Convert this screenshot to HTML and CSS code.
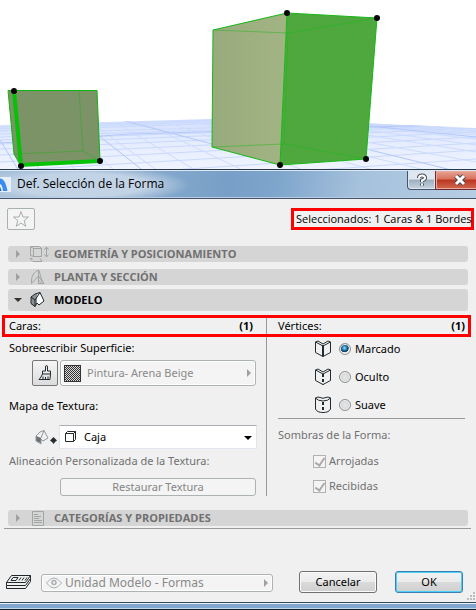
FILE: index.html
```html
<!DOCTYPE html>
<html lang="es">
<head>
<meta charset="utf-8">
<title>Def. Selección de la Forma</title>
<link rel="stylesheet" href="styles.css">
</head>
<body>
<svg class="scene" viewBox="0 0 476 169" preserveAspectRatio="xMidYMax slice" aria-hidden="true">
  <defs>
    <linearGradient id="ground" x1="0" y1="117" x2="0" y2="169" gradientUnits="userSpaceOnUse">
      <stop offset="0" stop-color="#cfdcfd"/><stop offset=".35" stop-color="#e2eafe"/><stop offset="1" stop-color="#f0f4ff"/>
    </linearGradient>
    <linearGradient id="face" x1="0" y1="0" x2="1" y2="0">
      <stop offset="0" stop-color="#98ab7c"/><stop offset="1" stop-color="#a3b484"/>
    </linearGradient>
    <clipPath id="floor"><path d="M0 125L245 118L476 128V169H0z"/></clipPath>
  </defs>
  <path fill="#fff" d="M0 0h476v169H0z"/>
  <path fill="url(#ground)" d="M0 125L245 118L476 128V169H0z"/>
  <g clip-path="url(#floor)" fill="none">
    <path stroke="#c9d8fd" d="M0 127L245 119L476 129M0 129L260 120L476 131M0 131L280 121L476 133M0 134L476 120M0 137L476 121M0 140L476 123M0 144L476 125M0 149L476 128M0 155L476 132M0 162L476 137M0 171L476 143M80 176L476 150M230 176L476 159"/>
    <path stroke="#cddbfd" d="M340 121L476 131M325 121L476 135M310 120L476 139M290 120L476 145M270 120L476 152M240 119L476 162M215 120L450 176M190 120L370 169M165 121L320 176M140 121L255 176M115 122L205 176M90 122L165 176M65 123L120 176M40 124L80 176M15 124L43 176"/>
    <path stroke="#b2c7fa" d="M125 121L220 146M98 135L150 176M0 140L22 176M370 150L476 176M370 126L476 137M0 143L130 134L476 124"/>
  </g>
  <path fill="#7c9267" d="M8 90L97 90L100 161L21 166L14 154z"/>
  <g fill="none" stroke="#10b410">
    <path stroke-opacity=".4" d="M79 90L83 151L100 161M83 151L14 154"/>
    <path d="M14 90.500H8L14 154L21 166M14 90.500H97L100 161"/>
    <path stroke="#06c206" stroke-width="4" d="M14 91L21 165L100 161"/>
  </g>
  <path fill="url(#face)" d="M213 30L287 13L280 165L212 147z"/>
  <path fill="#4fa83e" d="M287 13L377 18L366 159L280 165z"/>
  <g fill="none" stroke="#16b816">
    <path stroke-opacity=".45" d="M213 30L288 33L377 18M288 33L284 144L212 147M284 144L366 159"/>
    <path d="M213 30L287 13L377 18L366 159L280 165L212 147zM287 13L280 165"/>
  </g>
  <g fill="#050505"><circle cx="14" cy="91" r="3"/><circle cx="21" cy="166" r="3"/><circle cx="100" cy="161" r="3"/><circle cx="287" cy="13" r="3"/><circle cx="377" cy="18" r="3"/><circle cx="366" cy="159" r="3"/><circle cx="280" cy="165" r="3"/></g>
</svg>

<div class="dialog" role="dialog" aria-labelledby="dialog-title">
  <header class="titlebar">
    <svg class="app-icon" width="12" height="16" viewBox="0 0 12 16" aria-hidden="true"><path fill="#e8eff6" d="M0 0h11v15H0z"/><path fill="#3a8bf0" d="M0 1.500Q5 1 7.500 14H3Q2.500 8 0 7z"/><path fill="#1767c9" d="M0 9.500L1.500 14H0z"/></svg>
    <h1 id="dialog-title">Def. Selección de la Forma</h1>
    <div class="window-buttons">
      <button class="help" type="button" aria-label="Ayuda"><svg width="12" height="14" viewBox="0 0 12 14"><path d="M3 5Q3 2.500 6 2.500T9 5Q9 6.500 6 7.500V9M6 10.500v2" stroke="#444b5a" stroke-width="4" fill="none"/><path d="M3 5Q3 2.500 6 2.500T9 5Q9 6.500 6 7.500V9M6 10.500v2" stroke="#fff" stroke-width="2" fill="none"/></svg></button>
      <button class="close" type="button" aria-label="Cerrar"><svg width="14" height="12" viewBox="0 0 14 12"><path d="M3 2l8 8M11 2l-8 8" stroke="#50454c" stroke-width="5"/><path d="M3 2l8 8M11 2l-8 8" stroke="#fff" stroke-width="3"/></svg></button>
    </div>
  </header>

  <main class="content">
    <div class="toolbar">
      <button class="favorite" type="button" aria-label="Favoritos"><svg width="18" height="18" viewBox="0 0 18 18"><path d="M9 1.500l2 5.500h5.500l-4.300 3.500 1.600 5.800L9 13l-4.800 3.300 1.600-5.800L1.500 7H7z" fill="none" stroke="#a9aeae"/></svg></button>
      <p class="selection">Seleccionados: 1 Caras &amp; 1 Bordes</p>
    </div>

    <button class="section" type="button" aria-expanded="false"><span class="arrow"></span>
      <svg width="20" height="18" viewBox="0 0 20 18"><g fill="none" stroke="#a2a5a5"><path d="M4.500 3.500h8v8h-8zM4.500 3.500l-3-2h9l2 2M1.500 1.500v9l3 1M3.500 13.500H1l3 3h9l-2-3"/><path d="M17.500 3v8M15.500 4.500l2-2.500 2 2.500M15.500 9.500l2 2.500 2-2.500"/></g></svg>
      <span>GEOMETRÍA Y POSICIONAMIENTO</span></button>
    <button class="section" type="button" aria-expanded="false"><span class="arrow"></span>
      <svg width="20" height="18" viewBox="0 0 20 18"><path d="M2.500 15.500V12Q3 5 9.500 2v13.500M2.500 15.500L9.500 8M9.500 2l1 2 1 4 1 3 1 2 1.500 2.500h-6M9.500 8l4 6M9.500 12l3 3" fill="none" stroke="#a2a5a5"/></svg>
      <span>PLANTA Y SECCIÓN</span></button>
    <button class="section open" type="button" aria-expanded="true"><span class="arrow"></span>
      <svg width="20" height="18" viewBox="0 0 20 18"><path d="M2 6L8 2v10l-2 4-4-3z" fill="#8b9195"/><path d="M8 12V6l3-4 4 8-5 4z" fill="#fff"/><path d="M2 12.500V6L6 3l5-1.500L15 10l-5 4-2-2-2 3.500zM6 15.500V9l5-7.500M2 6l4 3" fill="none" stroke="#20282d"/></svg>
      <span>MODELO</span></button>

    <div class="columns">
      <section class="faces">
        <h2><span>Caras:</span><b>(1)</b></h2>
        <p class="label">Sobreescribir Superficie:</p>
        <div class="row surface">
          <button class="brush" type="button" aria-label="Sobreescribir superficie"><svg width="16" height="18" viewBox="0 0 16 18"><path d="M8.500 7V3q0-1.500 1-1.500t1 1.500v4h3v3h-8V7zM5.500 10L4 13l-2 2.500h11l.5-5.500M6 12.500v3M8.500 13v2.500M11 12.500v3" fill="none" stroke="#222b30"/></svg></button>
          <button class="menu material" type="button" disabled><span class="swatch"></span><span>Pintura- Arena Beige</span><span class="arrow"></span></button>
        </div>
        <label class="label" for="texture">Mapa de Textura:</label>
        <div class="row texture">
          <svg width="22" height="16" viewBox="0 0 22 16" aria-hidden="true"><path d="M1 7l5 2v5l-5-2z" fill="#697176"/><path d="M1 12V7l4-4 4-1.500L13 9l-5 3-2-2v5l-5-3M6 9l3-7.500" fill="none" stroke="#90979a"/><path d="M18.500 8l3.500 3.500-2 1.500-1.500 2-1.500-2-2-1.500z" fill="#252d31"/></svg>
          <div class="select">
            <svg width="13" height="13" viewBox="0 0 13 13" aria-hidden="true"><path d="M1.500 3.500h8v8h-8zM1.500 3.500l2-2h8v8l-2 2M9.500 3.500l2-2" fill="none" stroke="#20282d"/></svg>
            <select id="texture"><option>Caja</option></select>
          </div>
        </div>
        <p class="label muted">Alineación Personalizada de la Textura:</p>
        <button class="restore" type="button" disabled>Restaurar Textura</button>
      </section>

      <section class="vertices">
        <h2><span>Vértices:</span><b>(1)</b></h2>
        <div class="options">
          <label><svg width="18" height="18" viewBox="0 0 18 18"><path d="M1.500 2v10.500l7.500 4 7.500-4V2L9 6zM1.500 2L4 1l5 3 5-3 2.500 1" fill="none" stroke="#222b30"/><path d="M9 5v11.500" stroke="#222b30" stroke-width="2"/></svg><input type="radio" name="edge" checked>Marcado</label>
          <label><svg width="18" height="18" viewBox="0 0 18 18"><path d="M1.500 2v10.500l7.500 4 7.500-4V2L9 6zM1.500 2L4 1l5 3 5-3 2.500 1" fill="none" stroke="#222b30"/><path d="M9 6v10.500" stroke="#222b30" stroke-width="2" stroke-dasharray="3 2"/></svg><input type="radio" name="edge">Oculto</label>
          <label><svg width="18" height="18" viewBox="0 0 18 18"><path d="M1.500 2v11Q3 16.500 9 16.500t7.500-3.500V2Q14 5 9 5T1.500 2zM1.500 2L4 1q5 2.500 10 0l2.500 1" fill="none" stroke="#222b30"/><path d="M9 6v10.500" stroke="#222b30" stroke-width="2" stroke-dasharray="3 2"/></svg><input type="radio" name="edge">Suave</label>
        </div>
        <p class="label muted shadows">Sombras de la Forma:</p>
        <div class="checks">
          <label><input type="checkbox" checked disabled>Arrojadas</label>
          <label><input type="checkbox" checked disabled>Recibidas</label>
        </div>
      </section>
    </div>

    <button class="section last" type="button" aria-expanded="false"><span class="arrow"></span>
      <svg width="20" height="18" viewBox="0 0 20 18"><path d="M3.500 2.500h11v14h-11zM5 5.500h4M5 7.500h7M5 9.500h5M5 11.500h8M5 13.500h8" fill="none" stroke="#a2a5a5"/></svg>
      <span>CATEGORÍAS Y PROPIEDADES</span></button>

    <footer class="footer">
      <svg width="26" height="16" viewBox="0 0 26 16" aria-hidden="true"><path d="M6.500 1.500h19l-5 7H1.500zM1.500 8.500v3h19l5-7v-3M1.500 11.500v3h19l5-7v-3M8 3.500h5l-2 3H6zM16 3.500l-2 3M19 3.500l-2 3M22 3.500l-2 3" fill="none" stroke="#20282d"/></svg>
      <button class="menu layer" type="button" disabled><svg width="16" height="12" viewBox="0 0 16 12"><path d="M.5 6Q8-4 15.500 6 8 16 .5 6z" fill="none" stroke="#aaaeb0"/><circle cx="8" cy="5.500" r="2" fill="none" stroke="#aaaeb0" stroke-width="1.500"/></svg><span>Unidad Modelo - Formas</span><span class="arrow"></span></button>
      <button class="push cancel" type="button">Cancelar</button>
      <button class="push ok" type="submit">OK</button>
    </footer>
    <svg class="grip" width="10" height="10" viewBox="0 0 10 10" aria-hidden="true"><path d="M7 1h2v2H7zM4 4h2v2H4zM7 4h2v2H7zM1 7h2v2H1zM4 7h2v2H4zM7 7h2v2H7z" fill="#bdbdbd"/></svg>
  </main>
</div>
</body>
</html>
```
FILE: styles.css
```css
*, *::before, *::after { box-sizing: border-box; }
body { margin: 0; background: #f0f0f0; color: #000; font: 11px/16px "Noto Sans", "Open Sans", sans-serif; }
h1, h2, p { margin: 0; font-size: 11px; font-weight: 400; }
button, select { margin: 0; font: inherit; color: inherit; }
svg { display: block; flex: none; }
.scene { width: 100%; height: 169px; }

.dialog { border-top: 1px solid #29394a; border-bottom: 1px solid #14202c; }
.titlebar { display: flex; height: 29px; border-top: 1px solid #dce8f3; border-bottom: 1px solid #45536b; box-shadow: inset 0 -1px #b9cde2; background: radial-gradient(ellipse 110px 19px at 80px 14px, #c2d3e6 60%, transparent), linear-gradient(100deg, #a4bdd8, #779fc7 48%, #7ea5cc 58%, #a5c1dc 75%, #b6cde3); }
.app-icon { margin-top: 6px; }
h1 { flex: 1; padding: 5px; font-family: "Open Sans", sans-serif; font-size: 12px; }
.window-buttons { display: flex; height: 19px; margin-right: -9px; }
.window-buttons button { display: flex; align-items: center; justify-content: center; padding: 0; border: 1px solid #45536b; border-top: 0; box-shadow: inset 0 0 0 1px #dce5ef; }
.help { width: 29px; border-bottom-left-radius: 4px; background: linear-gradient(#dfe6ee 45%, #9caebf 50%, #c5d4e2); }
.window-buttons .close { width: 50px; margin-left: -1px; border-color: #6b2b2f; box-shadow: inset 0 0 0 1px #e8a89e; background: linear-gradient(#e7a595, #d7715c 45%, #bb3520 50%, #d26a50); }

.content { position: relative; padding: 9px 8px 9px; border-bottom: 1px solid #33485c; box-shadow: 0 1px #e5edf5, 0 5px #80a6ce, 0 6px #c3d7eb; margin-bottom: 6px; }
.toolbar { display: flex; justify-content: space-between; height: 22px; margin: 0 -6px 16px -1px; }
.favorite { display: flex; align-items: center; justify-content: center; width: 28px; padding: 0; border: 1px solid #a9b0b0; border-radius: 2px; background: #f4f4f4; }
.selection { width: 183px; padding-left: 2px; white-space: nowrap; border: 3px solid #f00; font-family: "Open Sans", sans-serif; }

.section { display: flex; align-items: center; width: 100%; height: 16px; margin-bottom: 7px; padding: 0 8px; border: 0; border-radius: 3px; background: #d5d5d5; color: #707070; font-family: "Open Sans", sans-serif; font-weight: 700; text-align: left; }
.section + .section.open { margin-top: -3px; }
.section svg { margin: 0 5px 0 7px; }
.section.open { height: 22px; margin-bottom: 4px; color: #000; }
.arrow { flex: none; width: 4px; height: 8px; background: #a0a0a0; clip-path: polygon(0 0, 100% 50%, 0 100%); }
.section .arrow { margin: 0 2px 0 0; }
.open .arrow { width: 8px; height: 4px; margin: 0 -2px 0 0; background: #333; clip-path: polygon(0 0, 100% 0, 50% 100%); }
.section.open .arrow { margin: 0 0 0 -2px; }

.columns { position: relative; display: grid; grid-template-columns: minmax(0, 1fr) 204px; height: 181px; margin: 0 -3px 14px -6px; }
.columns::before { content: ""; position: absolute; inset: 0 0 auto; height: 22px; border: 3px solid #f00; pointer-events: none; }
.faces { padding: 3px 11px 0 7px; border-right: 1px solid #999; }
.vertices { padding: 3px 6px 0 11px; }
h2 { display: flex; justify-content: space-between; margin-bottom: 6px; }
h2 b { margin-right: 2px; }
.vertices h2 b { margin-right: 0; }
.label { display: block; }
.muted { color: #707070; }
.row { display: flex; }
.surface { height: 26px; gap: 2px; margin: 4px -1px 12px 23px; }
.brush { display: flex; align-items: center; justify-content: center; width: 26px; padding: 0; border: 1px solid #777; border-radius: 2px; background: linear-gradient(#f5f5f5, #dcdcdc); }
.menu { display: flex; flex: 1; align-items: center; padding: 0 4px 0 3px; border: 1px solid #adb2b2; border-radius: 3px; box-shadow: inset 0 0 0 1px #fff; background: #f4f4f4; color: #8a8a8a; }
.menu .arrow { margin-left: auto; }
.swatch { width: 17px; height: 17px; margin-right: 6px; border: 1px solid #333; background: repeating-conic-gradient(#333 0 25%, #ddd 0 50%) 0 0 / 2px 2px; }
.texture { align-items: center; height: 24px; gap: 2px; margin: 11px -2px 4px 26px; }
.select { position: relative; flex: 1; height: 24px; }
.select svg { position: absolute; left: 5px; top: 5px; pointer-events: none; }
.select::after { content: ""; position: absolute; right: 5px; top: 11px; width: 8px; height: 4px; background: #000; clip-path: polygon(0 0, 100% 0, 50% 100%); pointer-events: none; }
select { appearance: none; width: 100%; height: 24px; padding: 0 20px 0 24px; border: 1px solid #e1e5ec; border-top-color: #abadb3; background: #fff; }
.restore { display: block; width: calc(100% - 50px); height: 18px; margin: 9px 0 0 51px; padding: 0; border: 1px solid #adb2b2; border-radius: 3px; background: #f4f4f4; color: #858585; line-height: 14px; }
.options { display: grid; gap: 10px; padding: 0 0 4px 36px; border-bottom: 1px solid #999; }
.options label { display: flex; align-items: center; height: 18px; }
.options input { appearance: none; width: 12px; height: 12px; margin: 0 4px 0 7px; border: 1px solid #8e8f8f; border-radius: 50%; background: radial-gradient(#e8e8e8, #c6cbd0); box-shadow: inset 0 0 0 1px #f4f4f4; }
.options input:checked { background: radial-gradient(circle at 45% 40%, #a6e0ff, #1873ac 30%, #0b3558 48%, #dfe3e6 55%); }
.shadows { margin: 8px 0 10px; }
.checks { display: grid; gap: 9px; padding-left: 35px; color: #707070; }
.checks label { display: flex; align-items: center; gap: 3px; height: 16px; }
.checks input { appearance: none; width: 13px; height: 13px; margin: 0; border: 1px solid #b1b1b1; background: #f4f4f4; }
.checks input::before { content: ""; display: block; width: 6px; height: 10px; margin-left: 3px; border: solid #aaa; border-width: 0 2px 2px 0; transform: rotate(35deg); }
.section.last { margin-bottom: 2px; }

.footer { display: flex; align-items: center; margin: 0 -3px 0 -4px; padding: 42px 8px 0 1px; border-top: 1px solid #999; }
.menu.layer { height: 18px; margin: 2px 26px 0 10px; padding-left: 4px; font-size: 12px; }
.layer svg { margin-right: 3px; }
.push { width: 78px; height: 22px; padding: 0; border: 1px solid #707070; border-radius: 3px; box-shadow: inset 0 0 0 1px #fafafa; background: linear-gradient(#f2f2f2, #ebebeb 50%, #dadada 52%, #cfcfcf); line-height: 18px; }
.ok { width: 68px; margin-left: 18px; border-color: #3c7fb1; box-shadow: inset 0 0 0 1px #48d0f8; }
.grip { position: absolute; right: 0; bottom: 1px; }
```
